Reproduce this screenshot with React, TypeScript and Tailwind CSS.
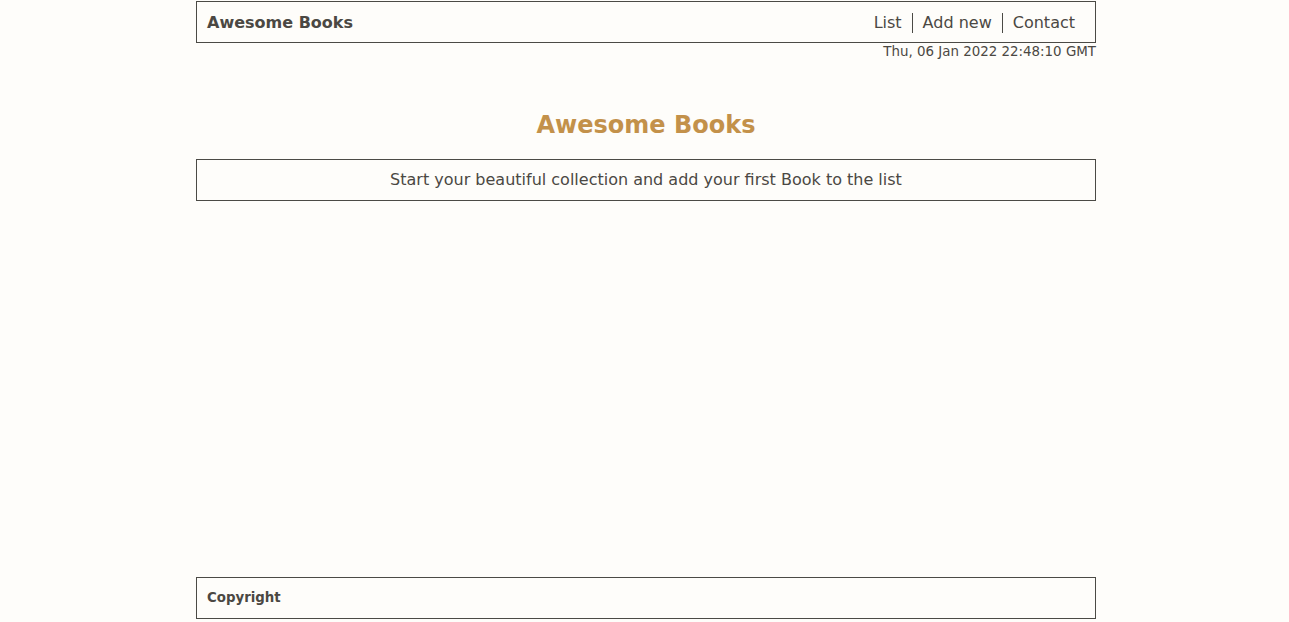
import React from "react";

export default function App() {
  return (
    <div
      className="min-h-[622px] bg-[#fefdfa] text-[#4b4843] flex flex-col pl-[196px] pt-px"
      style={{ fontFamily: '"DejaVu Sans", sans-serif' }}
    >
      <div className="w-[900px] flex flex-col flex-1">
        <header className="h-[42px] border border-[#4b4a45] flex items-center justify-between pl-[10px] pr-[20px] pt-[2px]">
          <span className="font-bold text-[16px]">Awesome Books</span>
          <nav className="flex items-center text-[16px]">
            <a className="pr-[10px] leading-[20px]">List</a>
            <a className="px-[10px] border-l border-[#4b4a45] leading-[20px]">Add new</a>
            <a className="pl-[10px] border-l border-[#4b4a45] leading-[20px]">Contact</a>
          </nav>
        </header>
        <div className="text-right text-[13.4px] leading-[16px] mt-px">Thu, 06 Jan 2022 22:48:10 GMT</div>
        <h1 className="text-center font-bold text-[24px] leading-[28px] text-[#c3914a] mt-[51px]">Awesome Books</h1>
        <div className="mt-[20px] h-[42px] border border-[#4b4a45] flex items-center justify-center text-[16px]">
          Start your beautiful collection and add your first Book to the list
        </div>
        <div className="flex-1" />
        <footer className="h-[42px] border border-[#4b4a45] flex items-center pl-[10px] mb-[3px]">
          <span className="font-bold text-[13.33px]">Copyright</span>
        </footer>
      </div>
    </div>
  );
}
